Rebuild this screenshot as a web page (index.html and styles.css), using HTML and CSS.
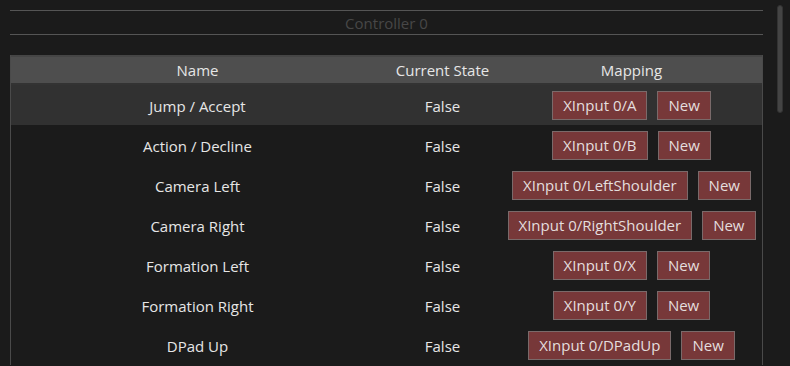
FILE: index.html
```html
<!DOCTYPE html>
<html lang="en">
<head>
  <meta charset="UTF-8">
  <title>Controller Mapping</title>
  <link rel="stylesheet" href="styles.css">
</head>
<body>
  <div class="panel">
    <div class="title">Controller 0</div>

    <div class="table">
      <div class="row head">
        <div class="c-name">Name</div>
        <div class="c-state">Current State</div>
        <div class="c-map">Mapping</div>
      </div>
      <div class="row active">
        <div class="c-name">Jump / Accept</div>
        <div class="c-state">False</div>
        <div class="c-map"><span class="btn">XInput 0/A</span><span class="btn">New</span></div>
      </div>
      <div class="row">
        <div class="c-name">Action / Decline</div>
        <div class="c-state">False</div>
        <div class="c-map"><span class="btn">XInput 0/B</span><span class="btn">New</span></div>
      </div>
      <div class="row">
        <div class="c-name">Camera Left</div>
        <div class="c-state">False</div>
        <div class="c-map"><span class="btn">XInput 0/LeftShoulder</span><span class="btn">New</span></div>
      </div>
      <div class="row">
        <div class="c-name">Camera Right</div>
        <div class="c-state">False</div>
        <div class="c-map"><span class="btn">XInput 0/RightShoulder</span><span class="btn">New</span></div>
      </div>
      <div class="row">
        <div class="c-name">Formation Left</div>
        <div class="c-state">False</div>
        <div class="c-map"><span class="btn">XInput 0/X</span><span class="btn">New</span></div>
      </div>
      <div class="row">
        <div class="c-name">Formation Right</div>
        <div class="c-state">False</div>
        <div class="c-map"><span class="btn">XInput 0/Y</span><span class="btn">New</span></div>
      </div>
      <div class="row">
        <div class="c-name">DPad Up</div>
        <div class="c-state">False</div>
        <div class="c-map"><span class="btn">XInput 0/DPadUp</span><span class="btn">New</span></div>
      </div>
    </div>
  </div>

  <div class="scrollbar"></div>
</body>
</html>
```

FILE: styles.css
```css
html, body {
  margin: 0;
  height: 100%;
  overflow: hidden;
}
body {
  background-color: #1b1b1b;
  color: #e6e6e6;
  font-family: 'Open Sans', sans-serif;
  font-size: 15px;
  position: relative;
}
.panel {
  padding: 10px 27px 0 10px;
}
.title {
  border-top: 1px solid #555;
  border-bottom: 1px solid #555;
  height: 23px;
  line-height: 24px;
  text-align: center;
  color: #474747;
  font-size: 15px;
}
.table {
  margin-top: 20px;
  border-left: 1px solid #4a4a4a;
  border-right: 1px solid #4a4a4a;
}
.row {
  display: flex;
  align-items: center;
  height: 40px;
  line-height: 20px;
  padding-top: 1px;
  box-sizing: border-box;
}
.row.head {
  height: 30px;
  padding-top: 0;
  background-color: #4e4e4e;
  border-top: 2px solid #454545;
  border-bottom: 2px solid #333;
}
.row.active {
  background-color: #313131;
}
.c-name {
  width: 373px;
  text-align: center;
}
.c-state {
  width: 117px;
  text-align: center;
}
.c-map {
  flex: 1;
  display: flex;
  justify-content: center;
  gap: 10px;
}
.btn {
  background-color: #773839;
  border: 1px solid #7a6a6a;
  color: #e4dede;
  height: 27px;
  line-height: 27px;
  padding: 0 10px;
}
.scrollbar {
  position: absolute;
  top: 5px;
  right: 7px;
  width: 4px;
  height: 106px;
  background-color: #444;
  border: 1px solid #333;
  border-radius: 3px;
}
```
